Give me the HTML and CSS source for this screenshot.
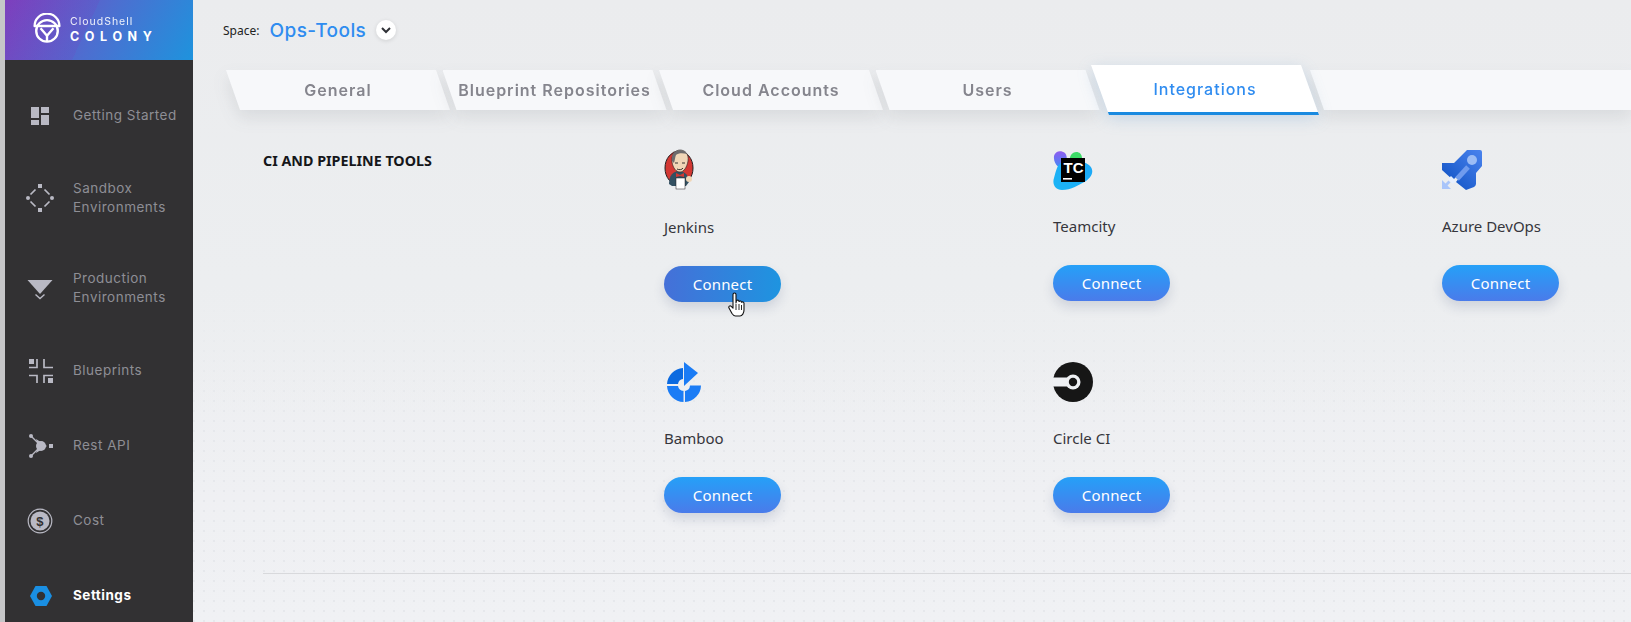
FILE: index.html
```html
<!DOCTYPE html>
<html lang="en">
<head>
<meta charset="utf-8">
<title>CloudShell Colony - Integrations</title>
<link rel="stylesheet" href="styles.css">
</head>
<body>
<div class="app">
  <aside class="sidebar">
    <div class="brand">
      <svg class="brand-logo" viewBox="2 1.5 26 29.5" width="28" height="32" fill="none" stroke="#fff" stroke-width="2.2">
        <path d="M3.5 13.5a11.5 11.5 0 0 1 23 0z" stroke-linejoin="round"/>
        <circle cx="15" cy="18" r="10"/>
        <path d="M9 15.500l6 7 6-7"/>
        <path d="M15 22v6"/>
      </svg>
      <div class="brand-text">
        <span class="brand-top">CloudShell</span>
        <span class="brand-name">COLONY</span>
      </div>
    </div>
    <nav class="nav">
      <a class="nav-item">
        <svg class="nav-icon" viewBox="0 0 28 28" fill="#b9b9c4"><rect x="5" y="5" width="8" height="11"/><rect x="15" y="5" width="8" height="6"/><rect x="5" y="18" width="8" height="5"/><rect x="15" y="13" width="8" height="10"/></svg>
        <span>Getting Started</span>
      </a>
      <a class="nav-item">
        <svg class="nav-icon" viewBox="0 0 28 28" fill="#b9b9c4"><rect x="12" y="0" width="4" height="4"/><rect x="12" y="24" width="4" height="4"/><circle cx="2" cy="14" r="2"/><circle cx="26" cy="14" r="2"/><path d="M9.500 5.500L4.500 10.500M18.500 5.500L23.500 10.500M4.500 17.500L9.500 22.500M23.500 17.500L18.500 22.500" fill="none" stroke="#b9b9c4" stroke-width="1.700"/></svg>
        <span>Sandbox<br>Environments</span>
      </a>
      <a class="nav-item">
        <svg class="nav-icon" viewBox="0 0 28 28" fill="#b9b9c4"><path d="M1.500 6h25L14 20z"/><path d="M9.500 20.500L14 24.500l4.500-4" fill="none" stroke="#b9b9c4" stroke-width="1.400"/></svg>
        <span>Production<br>Environments</span>
      </a>
      <a class="nav-item">
        <svg class="nav-icon" viewBox="0 0 28 28" fill="none" stroke="#b9b9c4" stroke-width="1.700"><path d="M3 10.500h8V2M18 2v8.500h9M3 18.500h8V26M27 18.500h-9V26"/><rect x="3" y="2" width="5" height="5" fill="#b9b9c4" stroke="none"/><rect x="22" y="21" width="5" height="5" fill="#b9b9c4" stroke="none"/></svg>
        <span>Blueprints</span>
      </a>
      <a class="nav-item">
        <svg class="nav-icon" viewBox="0 0 28 28" fill="#b9b9c4"><path d="M10 7l11 7-11 7 2-7z"/><circle cx="15" cy="14" r="5"/><circle cx="5" cy="4" r="2"/><circle cx="5" cy="24" r="2"/><rect x="23" y="12" width="4" height="4"/><path d="M5 4L12 11M5 24L12 17" stroke="#b9b9c4" stroke-width="1.400"/></svg>
        <span>Rest API</span>
      </a>
      <a class="nav-item">
        <svg class="nav-icon" viewBox="0 0 28 28"><circle cx="14" cy="14" r="11.800" fill="none" stroke="#b9b9c4" stroke-width="1.200"/><circle cx="14" cy="14" r="9.500" fill="#b9b9c4"/><text x="14" y="18.500" class="dollar">$</text></svg>
        <span>Cost</span>
      </a>
      <a class="nav-item is-active">
        <svg class="nav-icon" viewBox="0 0 28 28"><path fill="#1a8fe3" d="M9.500 4h11L26 14l-5.500 10h-11L4 14z"/><circle cx="15" cy="14" r="4.200" fill="#323133"/></svg>
        <span>Settings</span>
      </a>
    </nav>
  </aside>

  <main class="main">
    <header class="space-bar">
      <span class="space-label">Space:</span>
      <span class="space-name">Ops-Tools</span>
      <span class="space-toggle">
        <svg viewBox="0 0 12 12" width="12" height="12" fill="none" stroke="#2f3136" stroke-width="2"><path d="M2 4l4 4 4-4"/></svg>
      </span>
    </header>

    <div class="tabs">
      <div class="tab-wrap"><div class="tab">General</div></div>
      <div class="tab-wrap"><div class="tab">Blueprint Repositories</div></div>
      <div class="tab-wrap"><div class="tab">Cloud Accounts</div></div>
      <div class="tab-wrap"><div class="tab">Users</div></div>
      <div class="tab-wrap is-active"><div class="tab">Integrations</div></div>
      <div class="tab-wrap is-rest"><div class="tab"></div></div>
    </div>

    <section class="section">
      <h2 class="section-title">CI AND PIPELINE TOOLS</h2>
      <div class="tools">
        <article class="tool">
          <div class="tool-icon">
            <svg viewBox="0 0 30 44" width="30" height="44">
              <ellipse cx="15" cy="20" rx="14" ry="17" fill="#d33833" stroke="#231f20" stroke-width="1"/>
              <path d="M5 36c0-8 4-13 10-13s10 5 10 11l-3 4H8z" fill="#335061"/>
              <path d="M8 14c-1-7 3-12 8-12s9 4 8 11c-1 6-4 11-8 11s-7-4-8-10z" fill="#f0d6b7" stroke="#231f20" stroke-width=".6"/>
              <path d="M8 13c-1-7 3-11 8-11 3 0 5 1 7 4-4-1-9-1-11 1-1 2-1 5-2 8z" fill="#6d6b6d"/>
              <path d="M11 15h3M18 15h3M13 21c2 1 5 1 6-1" stroke="#231f20" stroke-width=".9" fill="none"/>
              <path d="M12 25l4 2 4-2v4l-4-1-4 1z" fill="#d33833"/>
              <rect x="12" y="30" width="9" height="11" fill="#fff" stroke="#231f20" stroke-width=".5"/>
              <circle cx="25" cy="31" r="3" fill="#f0d6b7"/>
            </svg>
          </div>
          <div class="tool-name">Jenkins</div>
          <a class="connect is-hover">Connect
            <svg class="cursor" viewBox="0 0 18 26" width="18" height="26">
              <path d="M5 2.500a1.500 1.500 0 0 1 3 0V11l.5-2.500c1.500-.8 2.500 0 2.500 1 1-1 2.500-.5 2.500.8 1-.8 2.500-.2 2.500 1V18c0 3-1.800 6-4 6H7.500c-1.500 0-2.500-1-3.500-2.500L1 16c-.8-1.500 1-2.800 2-1.800l2 2z" fill="#fff" stroke="#111" stroke-width="1.100" stroke-linejoin="round"/>
              <path d="M8 12v6M11 12v6M13.500 13v5" stroke="#111" stroke-width=".9"/>
            </svg>
          </a>
        </article>

        <article class="tool is-raised">
          <div class="tool-icon">
            <svg viewBox="0 0 40 44" width="40" height="44">
              <defs>
                <linearGradient id="tc-a" x1="0" y1="0" x2="0" y2="1"><stop offset="0" stop-color="#8f5cf0"/><stop offset="1" stop-color="#3f8cf5"/></linearGradient>
                <linearGradient id="tc-b" x1="0" y1="1" x2="1" y2="0"><stop offset="0" stop-color="#1cb5f5"/><stop offset="1" stop-color="#1ca7f7"/></linearGradient>
              </defs>
              <g transform="translate(0 3)">
                <path d="M1 6c1-5 7-6 11-3 3 3 2 12-1 15-5 2-11-5-10-12z" fill="url(#tc-a)"/>
                <path d="M18 5c3-5 11-4 11 3 0 5-5 8-9 7-3-2-4-7-2-10z" fill="#3ddc68"/>
                <path d="M8 13c6-2 20-4 28 2 6 5 3 12-3 16-7 4-15 9-24 9-7 0-10-6-8-12 2-7 3-13 7-15z" fill="url(#tc-b)"/>
              </g>
              <rect x="8" y="11" width="24" height="24" fill="#000"/>
              <rect x="10" y="31" width="9" height="1.600" fill="#fff"/>
              <text x="10.500" y="26" class="tc-mark">TC</text>
            </svg>
          </div>
          <div class="tool-name">Teamcity</div>
          <a class="connect">Connect</a>
        </article>

        <article class="tool is-raised">
          <div class="tool-icon">
            <svg viewBox="0 0 40 44" width="40" height="44">
              <defs>
                <linearGradient id="az-a" x1="0" y1="1" x2="1" y2="0"><stop offset="0" stop-color="#0b4ec0"/><stop offset="1" stop-color="#4a83ee"/></linearGradient>
              </defs>
              <g transform="translate(0 2)">
                <path d="M25 1h13a2 2 0 0 1 2 2v14l-6 7v11a4 4 0 0 1-2 3l-8 3-10-8 7-9-2-1-8 8-11-10v-7h12z" fill="url(#az-a)"/>
                <circle cx="30" cy="11" r="5" fill="#9bbcf5"/>
                <path d="M26 18L15 30" stroke="#6f9bee" stroke-width="5"/>
                <path d="M0 31v9h9l-3.500-3.500 3-3-2-2-3 3z" fill="#a9c5fa"/>
                <path d="M9 27l5 5-3 3-5-5z" fill="#e8f0fe"/>
              </g>
            </svg>
          </div>
          <div class="tool-name">Azure DevOps</div>
          <a class="connect">Connect</a>
        </article>

        <article class="tool">
          <div class="tool-icon">
            <svg viewBox="0 0 40 44" width="40" height="44">
              <path d="M20 3L34 14 20 27z" fill="#1b7cf5"/>
              <path d="M3 25A17 17 0 0 1 19 9V20A6 6 0 0 0 14 25Z" fill="#0b6ae0"/>
              <path d="M3 27H14A6 6 0 0 0 19.500 32V43A17 17 0 0 1 3 27Z" fill="#1b7cf5"/>
              <path d="M21 43V32A6 6 0 0 0 26 26.500H37A17 17 0 0 1 21 43Z" fill="#1b7cf5"/>
            </svg>
          </div>
          <div class="tool-name">Bamboo</div>
          <a class="connect">Connect</a>
        </article>

        <article class="tool">
          <div class="tool-icon">
            <svg viewBox="0 0 40 44" width="40" height="44">
              <circle cx="20" cy="23" r="20" fill="#161616"/>
              <circle cx="20" cy="23" r="7.500" fill="#eef0f3"/>
              <rect x="0" y="18.500" width="18" height="9" fill="#eef0f3"/>
              <circle cx="20" cy="23" r="4.200" fill="#161616"/>
            </svg>
          </div>
          <div class="tool-name">Circle CI</div>
          <a class="connect">Connect</a>
        </article>
      </div>
    </section>
    <hr class="divider">
  </main>
</div>
</body>
</html>
```
FILE: styles.css
```css
* { box-sizing: border-box; }
html, body { margin: 0; height: 100%; overflow: hidden; }
body {
  font-family: "Noto Sans", "Open Sans", sans-serif;
  background: #c6c6c8;
}
.app { display: flex; height: 622px; padding-left: 5px; }

/* Sidebar */
.sidebar { width: 188px; flex: none; background: #323133; }
.brand {
  height: 60px;
  display: flex;
  align-items: center;
  gap: 9px;
  padding: 0 0 2px 28px;
  background:
    linear-gradient(115deg, rgba(120, 60, 190, .16) 0 44%, transparent 44%),
    linear-gradient(120deg, #7f3fbd 0%, #4d6ed0 50%, #1e93dd 100%);
}
.brand-logo { flex: none; }
.brand-text { display: flex; flex-direction: column; color: #fff; font-family: "Inter", sans-serif; }
.brand-top { font-size: 10.5px; letter-spacing: 1px; line-height: 15px; opacity: .9; }
.brand-name { font-size: 12.5px; font-weight: 700; letter-spacing: 5.6px; line-height: 16px; }
.nav { padding: 18px 0 0 21px; }
.nav-item {
  display: flex;
  align-items: center;
  gap: 19px;
  min-height: 75px;
  padding: 26px 0;
  font-family: "Inter", sans-serif;
  font-size: 13.5px;
  line-height: 19px;
  letter-spacing: .5px;
  color: #8e8e95;
}
.nav-icon { width: 28px; height: 28px; flex: none; margin: -5px 0; }
.nav-item.is-active { color: #fff; font-weight: 700; }
.dollar { font: 700 13px "Liberation Sans", sans-serif; fill: #323133; text-anchor: middle; }

/* Main */
.main {
  flex: 1;
  min-width: 0;
  overflow: hidden;
  background-color: #eceef0;
  background-image:
    linear-gradient(180deg, #ebecee 0, #eceef0 280px, rgba(238, 240, 243, 0) 420px),
    radial-gradient(circle at 1px 1px, #e6e8ec 1px, transparent 1.3px),
    linear-gradient(180deg, #ebecee 0%, #f0f1f4 100%);
  background-size: 100% 100%, 10px 10px, 100% 100%;
}
.space-bar {
  height: 60px;
  display: flex;
  align-items: center;
  padding-left: 30px;
}
.space-label { font-size: 12px; color: #222; margin-right: 10px; }
.space-name { font-family: "Inter", sans-serif; font-size: 19px; font-weight: 500; letter-spacing: .45px; color: #2f8cf0; }
.space-toggle {
  width: 20px;
  height: 20px;
  margin-left: 10px;
  border-radius: 50%;
  background: #fff;
  display: flex;
  align-items: center;
  justify-content: center;
  box-shadow: 0 1px 4px rgba(0, 0, 0, .12);
}

/* Tabs */
.tabs { display: flex; margin: 10px 0 0 33px; height: 40px; }
.tab-wrap {
  width: 224px;
  height: 40px;
  flex: none;
  margin-right: -7.5px;
  filter: drop-shadow(0 8px 8px rgba(60, 65, 75, .1));
}
.tab {
  height: 100%;
  display: flex;
  align-items: center;
  justify-content: center;
  background: #f7f8fa;
  clip-path: polygon(0 0, 210px 0, 100% 100%, 14px 100%);
  font-family: "Inter", sans-serif;
  font-size: 16px;
  font-weight: 600;
  letter-spacing: 1px;
  white-space: nowrap;
  color: #85858d;
}
.tab-wrap.is-active {
  width: 228px;
  height: 50px;
  margin: -5px -9px 0 -1px;
  position: relative;
  z-index: 2;
  filter: drop-shadow(0 4px 8px rgba(70, 130, 190, .22));
}
.tab-wrap.is-active .tab {
  background: linear-gradient(180deg, #fff 0 47px, #1a8ae0 47px);
  clip-path: polygon(0 0, 210px 0, 100% 100%, 18px 100%);
  color: #2f8cf0;
  font-weight: 500;
  padding-bottom: 3px;
}
.tab-wrap.is-rest { flex: 1; margin-right: 0; }
.tab-wrap.is-rest .tab { clip-path: polygon(0 0, 100% 0, 100% 100%, 14px 100%); }

/* Tools */
.section { display: flex; margin: 38px 0 0 70px; }
.section-title {
  width: 401px;
  flex: none;
  margin: 0;
  padding-top: 3px;
  font-size: 14.3px;
  line-height: 20px;
  font-weight: 700;
  color: #15161a;
}
.tools { display: grid; grid-template-columns: repeat(3, 389px); row-gap: 57px; }
.tool.is-raised { margin-top: -1px; }
.tool-icon { height: 44px; }
.tool-icon svg { display: block; }
.tool-name { margin-top: 25px; height: 20px; font-size: 15px; line-height: 20px; color: #36363c; }
.connect {
  position: relative;
  display: flex;
  align-items: center;
  justify-content: center;
  width: 117px;
  height: 36px;
  margin-top: 29px;
  border-radius: 18px;
  background: linear-gradient(180deg, #25a0f8 0%, #4a7bea 100%);
  box-shadow: 0 6px 12px rgba(50, 70, 110, .16);
  color: #fff;
  font-size: 15px;
  letter-spacing: .2px;
}
.connect.is-hover { background: linear-gradient(90deg, #4570d8 0%, #1e94e0 100%); }
.cursor { position: absolute; left: 64px; top: 26px; }
.tc-mark { font: 700 15px "Liberation Sans", sans-serif; fill: #fff; }

.divider { margin: 60px 0 0 70px; border: 0; border-top: 1px solid #d8d9dc; }
```
